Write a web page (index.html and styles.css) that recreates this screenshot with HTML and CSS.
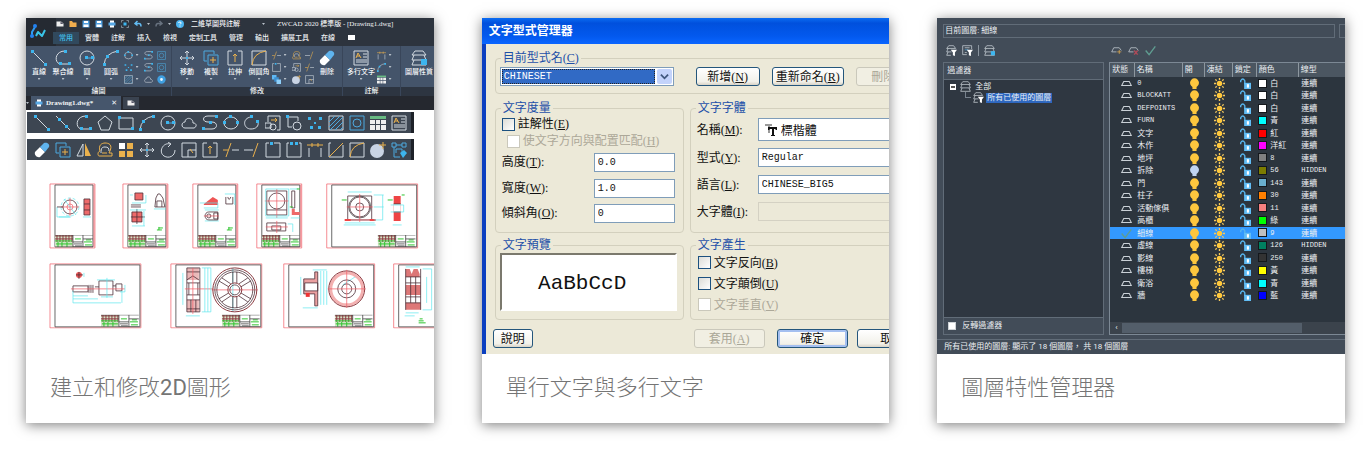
FILE: index.html
```html
<!DOCTYPE html>
<html lang="zh-Hant">
<head>
    <meta charset="UTF-8">
    <meta name="viewport" content="width=device-width, initial-scale=1.0">
    <title>ZWCAD 功能介紹</title>
    <link rel="stylesheet" href="styles.css">
</head>
<body>
    <!-- Icon set, 16x16 grid -->
    <svg class="defs" aria-hidden="true">
        <symbol id="line" viewBox="0 0 16 16"><path class="w" d="M1 1l14 14"/><path class="bf" d="M0 0h3v3H0zM13 13h3v3h-3z"/></symbol>
        <symbol id="xline" viewBox="0 0 16 16"><path class="w" d="M1 1l14 14"/><path class="bf" d="M3 3h3v3H3zM10 10h3v3h-3z"/></symbol>
        <symbol id="pline" viewBox="0 0 16 16"><path class="w" d="M10 1C-1 1-1 14 6 14h8"/><path class="bf" d="M9 0h3v3H9zM4 12h3v3H4zM13 12h3v3h-3z"/></symbol>
        <symbol id="polygon" viewBox="0 0 16 16"><path class="w" d="M8 1l7 6-3 8H4L1 7z"/></symbol>
        <symbol id="rect" viewBox="0 0 16 16"><path class="w" d="M1 3h14v11H1z"/><path class="bf" d="M0 1h3v3H0zM13 12h3v3h-3z"/></symbol>
        <symbol id="arc" viewBox="0 0 16 16"><path class="w" d="M1 15Q2 3 15 1"/><path class="bf" d="M0 13h3v3H0zM3 5h3v3H3zM13 0h3v3h-3z"/></symbol>
        <symbol id="circle" viewBox="0 0 16 16"><circle class="w" cx="8" cy="8" r="7"/><path class="b" d="M8 8h6"/><path class="bf" d="M6 6h3v3H6zM12 6h3v3h-3z"/></symbol>
        <symbol id="cloud" viewBox="0 0 16 16"><path class="w" d="M4 13h9c3-1 3-5-1-5 0-6-8-6-8-1-4 0-4 6 0 6z"/></symbol>
        <symbol id="spline" viewBox="0 0 16 16"><path class="w" d="M14 1H6C0 1 0 7 6 7h4c6 0 6 7 0 7H2"/><path class="bf" d="M13 0h3v3h-3zM7 6h3v3H7zM0 12h3v3H0z"/></symbol>
        <symbol id="ellipse" viewBox="0 0 16 16"><ellipse class="w" cx="8" cy="8" rx="7" ry="6"/><path class="bf" d="M6 0h3v3H6zM0 6h3v3H0zM13 6h3v3h-3z"/></symbol>
        <symbol id="earc" viewBox="0 0 16 16"><path class="w" d="M7 2C-2 3-1 14 7 14c5 0 8-3 7-7"/><path class="bf" d="M6 0h3v3H6zM12 5h3v3h-3z"/></symbol>
        <symbol id="insert" viewBox="0 0 16 16"><path class="w" d="M3 7V1h12v14h-3M0 8h6v5H0z"/><circle class="w" cx="8" cy="12" r="3"/><path class="y" d="M6 5h6M10 3l2 2-2 2"/></symbol>
        <symbol id="block" viewBox="0 0 16 16"><path class="w" d="M2 1v11h4M2 2h10v4"/><circle class="w" cx="11" cy="11" r="4"/><path class="bf" d="M0 0h3v3H0z"/></symbol>
        <symbol id="point" viewBox="0 0 16 16"><path class="bf" d="M1 2h3v3H1zM12 2h3v3h-3zM7 7h2v2H7zM3 11h3v3H3zM11 11h3v3h-3z"/></symbol>
        <symbol id="hatch" viewBox="0 0 16 16"><path class="w" d="M1 1h14v14H1z"/><path class="b" d="M1 7l6-6M1 12L12 1M2 15L15 2M7 15l8-8M12 15l3-3"/></symbol>
        <symbol id="region" viewBox="0 0 16 16"><path class="b" d="M1 1h14v14H1z"/><circle class="b" cx="8" cy="8" r="4"/></symbol>
        <symbol id="donut" viewBox="0 0 16 16"><circle cx="8" cy="8" r="5" fill="#eaf6ff" stroke="#3f9fe0" stroke-width="5"/></symbol>
        <symbol id="table" viewBox="0 0 16 16"><path fill="#68bb83" d="M0 1h16v3H0z"/><path fill="#eee" d="M0 5h5v4H0zM6 5h4v4H6zM11 5h5v4h-5zM0 10h5v5H0zM6 10h4v5H6zM11 10h5v5h-5z"/></symbol>
        <symbol id="mtext" viewBox="0 0 16 16"><path class="w" d="M1 1h14v14H1zM10 4h4M10 7h4M3 10h11M3 12h11"/><path class="y" d="M3 8l2-5 3 5M4 6h3"/></symbol>
        <symbol id="eraser" viewBox="0 0 16 16"><path fill="#fff" d="M1 10l5-5 5 5-5 5c-3 1-6-2-5-5z"/><path fill="#5fb4ee" d="M6 5l4-4c3-1 6 1 5 4l-4 5z"/></symbol>
        <symbol id="copy" viewBox="0 0 16 16"><path class="b" d="M4 11H1V1h10v3"/><path class="b" d="M5 5h10v10H5z"/><path class="y" d="M10 7v6M7 10h6"/></symbol>
        <symbol id="mirror" viewBox="0 0 16 16"><path class="w" d="M1 14L7 2v12z"/><path fill="#eab14d" d="M9 1l6 13H9z"/></symbol>
        <symbol id="offset" viewBox="0 0 16 16"><path class="w" d="M4 11C4 6 5 5 8 5s4 1 4 4"/><path class="y" d="M2 14h13v-3h-3C17 2 11 1 8 1S1 3 3 9c-3 1-2 5-1 5zM5 11h5"/></symbol>
        <symbol id="array" viewBox="0 0 16 16"><path fill="#fff" d="M1 1h6v6H1z"/><path fill="#eab14d" d="M9 1h6v6H9zM1 9h6v6H1zM9 9h6v6H9z"/></symbol>
        <symbol id="order" viewBox="0 0 16 16"><path fill="#5fb8f4" d="M0 0h8v8H0z"/><path fill="#3d8fd0" d="M4 4h8v8H4z"/><path fill="#8fd0fa" d="M8 8h8v8H8z"/></symbol>
        <symbol id="move" viewBox="0 0 16 16"><path class="w" d="M8 1v14M1 8h14M6 3l2-2 2 2M6 13l2 2 2-2M3 6L1 8l2 2M13 6l2 2-2 2"/><path class="bf" d="M7 7h2v2H7z"/></symbol>
        <symbol id="rotate" viewBox="0 0 16 16"><path class="w" d="M10 2C3 0-2 10 4 14c5 3 11 0 11-6M8 0l3 2-3 3"/></symbol>
        <symbol id="scale" viewBox="0 0 16 16"><path class="w" d="M1 1h14v14H1zM7 15V8h8"/><path class="y" d="M12 11L9 7"/></symbol>
        <symbol id="stretch" viewBox="0 0 16 16"><path class="w" d="M5 1H1v14h14V1h-4"/><path class="y" d="M8 12V4M6 6l2-2 2 2"/></symbol>
        <symbol id="trim" viewBox="0 0 16 16"><path class="y" d="M3 15L8 1M0 8h5"/><path class="w" d="M9 8h7"/></symbol>
        <symbol id="extend" viewBox="0 0 16 16"><path class="w" d="M0 8h9"/><path class="y" d="M9 15l5-14"/></symbol>
        <symbol id="break1" viewBox="0 0 16 16"><path class="w" d="M4 1H1v14h14V1H9"/><path class="bf" d="M5 0h3v3H5z"/></symbol>
        <symbol id="break2" viewBox="0 0 16 16"><path class="w" d="M3 1H1v14h14V1h-2"/><path class="bf" d="M4 0h3v3H4zM9 0h3v3H9z"/></symbol>
        <symbol id="join" viewBox="0 0 16 16"><path class="w" d="M2 15V6M14 15V6"/><path class="y" d="M0 3h16M5 1v4M11 1v4"/></symbol>
        <symbol id="chamfer" viewBox="0 0 16 16"><path class="w" d="M3 1H1v14h14V3"/><path class="y" d="M1 15L15 1"/></symbol>
        <symbol id="fillet" viewBox="0 0 16 16"><path class="w" d="M1 1h14v14H1z"/><path class="y" d="M1 15Q2 3 15 1"/></symbol>
        <symbol id="explode" viewBox="0 0 16 16"><circle cx="7" cy="9" r="7" fill="#c9d4e4"/><path class="y" d="M13 0v7M9 3h7"/></symbol>
        <symbol id="gear" viewBox="0 0 16 16"><path class="b" d="M1 1h4v4H1zM11 1h4v4h-4zM5 3h6M3 5v10h6M5 11V7h6v3"/><path class="bf" d="M9 11l4-3 3 3-4 5z"/></symbol>
        <symbol id="layers" viewBox="0 0 16 16"><path class="w" d="M4 1h8l3 4H1zM3 5L1 10h14l-2-5M3 10l-2 5h14l-2-5"/><path class="bf" d="M10 9h6v6h-6z"/></symbol>
        <symbol id="doc" viewBox="0 0 16 16"><path fill="#eee" d="M1 3h9l5 4v6H1z"/><path fill="#556" d="M9 3v5h6z"/></symbol>
        <symbol id="folder" viewBox="0 0 16 16"><path fill="#f2ae4e" d="M1 2h5l2 3h7v9H1z"/></symbol>
        <symbol id="save" viewBox="0 0 16 16"><path fill="#4c9ee0" d="M1 1h14v14H1z"/><path fill="#fff" d="M4 2h8v4H4zM3 9h10v5H3z"/></symbol>
        <symbol id="print" viewBox="0 0 16 16"><path fill="#fff" d="M4 1h8v14H4z"/><path fill="#58a9e6" d="M1 5h14v6H1z"/></symbol>
        <symbol id="preview" viewBox="0 0 16 16"><path class="w" d="M1 5V1h4M11 1h4v4M1 11v4h4M15 11v4h-4"/><path class="bf" d="M5 5h6v6H5z"/></symbol>
        <symbol id="undo" viewBox="0 0 16 16"><path fill="none" stroke="#63bcf3" stroke-width="3" d="M7 2L2 7l5 4M3 7h7q4 0 4 6"/></symbol>
        <symbol id="redo" viewBox="0 0 16 16"><path fill="none" stroke="#68727f" stroke-width="3" d="M9 2l5 5-5 4M13 7H6q-4 0-4 6"/></symbol>
        <symbol id="help" viewBox="0 0 16 16"><circle cx="8" cy="8" r="8" fill="#4cb4f0"/><path fill="none" stroke="#fff" stroke-width="2" d="M5 6q1-3 4-2 3 2-1 5M8 11v2"/></symbol>
        <symbol id="state" viewBox="0 0 16 16"><path fill="none" stroke="#c9d0d6" stroke-width="1.5" d="M4 5h8l3 6H1z"/></symbol>
        <symbol id="check" viewBox="0 0 16 16"><path fill="none" stroke="#5f9d91" stroke-width="2" d="M1 8l5 6L15 2"/></symbol>
        <symbol id="bulb" viewBox="0 0 16 16"><circle cx="8" cy="7" r="6.5" fill="currentColor"/><path fill="currentColor" d="M5 11h6v5H5z"/></symbol>
        <symbol id="sun" viewBox="0 0 16 16"><circle cx="8" cy="8" r="4" fill="#ffc83c"/><path fill="none" stroke="#f6c95c" stroke-width="2" d="M8 0v3M8 13v3M0 8h3M13 8h3M2 2l2 2M12 12l2 2M14 2l-2 2M4 12l-2 2"/></symbol>
        <symbol id="lock" viewBox="0 0 16 16"><path fill="none" stroke="#58b6ee" stroke-width="2" d="M1 6V4q3-5 6 0v5"/><path fill="#62bdf5" d="M6 7h10v9H6z"/><path fill="#fff" d="M10 9h3v5h-3z"/></symbol>
        <symbol id="filter" viewBox="0 0 16 16"><path class="w" d="M4 1h7l3 4H1zM3 5l-2 5h7M3 10l-2 5h6"/><path fill="#fff" d="M7 7h9l-3 4v5l-3-1v-4z"/></symbol>
        <symbol id="filter2" viewBox="0 0 16 16"><path class="w" d="M14 6V1H1v13h6M4 4h7M4 11h3"/><path class="b" d="M4 7h5"/><path fill="#fff" d="M7 7h9l-3 4v5l-3-1v-4z"/></symbol>
        <symbol id="stack" viewBox="0 0 16 16"><path class="w" d="M4 1h8l3 4H1zM3 5l-2 5h14l-2-5M3 10l-2 5h14l-2-5"/></symbol>
        <symbol id="newlayer" viewBox="0 0 16 16"><path class="w" d="M1 10l3-6h8l3 4M1 10h7"/><path class="y" d="M12 7v6M9 10h6"/></symbol>
        <symbol id="dellayer" viewBox="0 0 16 16"><path class="w" d="M1 10l3-6h8l3 4M1 10h7"/><path fill="none" stroke="#b04a58" stroke-width="2" d="M9 8l5 6M14 8l-5 6"/></symbol>
        <symbol id="portrait" viewBox="0 0 47 66">
            <path class="red" d="M1 1h45v64H1z"/><path class="blk" d="M6 2h38v62H6z"/><path class="red" d="M45 2v62"/>
            <use href="#titleblock" x="6" y="52" width="38" height="12"/>
        </symbol>
        <symbol id="landscape" viewBox="0 0 93 66">
            <path class="red" d="M1 1h91v64H1z"/><path class="blk" d="M6 2h85v62H6z"/>
            <use href="#titleblock" x="52" y="52" width="38" height="12"/>
        </symbol>
        <symbol id="titleblock" viewBox="0 0 38 12">
            <path fill="#d3e3c6" d="M0 0h18v12H0z"/>
            <path class="maroon" d="M0 1h18M0 4h18M2 0v7M5 0v7M8 0v7M11 0v7M14 0v7M17 0v7"/>
            <path class="grn" d="M0 6h17M1 9h16M3 7v5M7 7v5M12 7v5M20 4h6M29 7h8M31 5h5M30 10h7"/>
            <path class="blk" d="M0 0h38M18 0v12M28 0v12M18 7h10M28 4h10M0 12h38M19 9h8M20 11h7"/>
        </symbol>
    </svg>

    <main class="features">
        <article class="card">
            <div class="shot cad">
                <header class="cad-head">
                    <div class="logo">
                        <svg viewBox="0 0 30 28"><path fill="none" stroke="#2f9cf4" stroke-width="2" d="M9 9l-3 5v4"/><path fill="none" stroke="#39c4e8" stroke-width="2" stroke-linejoin="round" d="M10 18l2-4 4 4 3-6"/><circle cx="9" cy="8" r="2" fill="#2482f0"/><circle cx="6" cy="18" r="2" fill="#2482f0"/></svg>
                    </div>
                    <div class="cad-bars">
                        <div class="quick">
                            <button aria-label="新建"><svg><use href="#doc"/></svg></button>
                            <button aria-label="打開"><svg><use href="#folder"/></svg></button>
                            <button aria-label="儲存"><svg><use href="#save"/></svg></button>
                            <button aria-label="另存"><svg><use href="#save"/></svg></button>
                            <button aria-label="列印"><svg><use href="#print"/></svg></button>
                            <button aria-label="預覽"><svg><use href="#preview"/></svg></button>
                            <button aria-label="復原"><svg><use href="#undo"/></svg></button>
                            <i class="tri"></i>
                            <button aria-label="重做"><svg><use href="#redo"/></svg></button>
                            <i class="tri"></i>
                            <button aria-label="說明"><svg><use href="#help"/></svg></button>
                            <select class="workspace" aria-label="工作空間"><option>二維草圖與註解</option></select>
                            <i class="tri"></i>
                            <span class="app-title">ZWCAD 2020 標準版 - [Drawing1.dwg]</span>
                        </div>
                        <nav class="tabs">
                            <a href="#" class="active">常用</a><a href="#">實體</a><a href="#">註解</a><a href="#">插入</a><a href="#">檢視</a><a href="#">定制工具</a><a href="#">管理</a><a href="#">輸出</a><a href="#">擴展工具</a><a href="#">在線</a>
                            <button class="fold" aria-label="收合"></button>
                        </nav>
                    </div>
                </header>
                <div class="ribbon">
                    <section class="group g-draw">
                        <div class="tools">
                            <button class="big"><svg><use href="#line"/></svg>直線<i class="tri"></i></button>
                            <button class="big"><svg><use href="#pline"/></svg>聚合線<i class="tri"></i></button>
                            <button class="big"><svg><use href="#circle"/></svg>圓<i class="tri"></i></button>
                            <button class="big"><svg><use href="#arc"/></svg>圓弧<i class="tri"></i></button>
                            <div class="small">
                                <svg><use href="#ellipse"/></svg><i class="tri"></i><svg><use href="#spline"/></svg><svg><use href="#region"/></svg>
                                <svg><use href="#point"/></svg><i class="tri"></i><svg><use href="#spline"/></svg><svg><use href="#region"/></svg>
                                <svg><use href="#hatch"/></svg><i class="tri"></i><svg><use href="#cloud"/></svg><svg><use href="#donut"/></svg>
                            </div>
                        </div>
                        <div class="group-name">繪圖</div>
                    </section>
                    <section class="group g-modify">
                        <div class="tools">
                            <button class="big"><svg><use href="#move"/></svg>移動<i class="tri"></i></button>
                            <button class="big"><svg><use href="#copy"/></svg>複製<i class="tri"></i></button>
                            <button class="big"><svg><use href="#stretch"/></svg>拉伸<i class="tri"></i></button>
                            <button class="big"><svg><use href="#fillet"/></svg>倒圓角<i class="tri"></i></button>
                            <div class="small">
                                <svg><use href="#trim"/></svg><i class="tri"></i><svg><use href="#offset"/></svg><svg><use href="#extend"/></svg>
                                <svg><use href="#break1"/></svg><i class="tri"></i><svg><use href="#insert"/></svg><svg><use href="#trim"/></svg>
                                <svg><use href="#order"/></svg><i class="tri"></i><svg><use href="#explode"/></svg><svg><use href="#scale"/></svg>
                            </div>
                            <button class="big"><svg><use href="#eraser"/></svg>刪除</button>
                        </div>
                        <div class="group-name">修改</div>
                    </section>
                    <section class="group g-note">
                        <div class="tools">
                            <button class="big wide"><svg><use href="#mtext"/></svg>多行文字<i class="tri"></i></button>
                            <div class="small pair">
                                <svg><use href="#join"/></svg><i class="tri"></i>
                                <svg><use href="#arc"/></svg><i class="tri"></i>
                                <svg><use href="#table"/></svg><i class="tri"></i>
                            </div>
                        </div>
                        <div class="group-name">註解</div>
                    </section>
                    <section class="group g-layer">
                        <div class="tools">
                            <button class="big wide"><svg><use href="#layers"/></svg>圖層性質</button>
                        </div>
                        <div class="group-name"></div>
                    </section>
                </div>
                <div class="files">
                    <i class="tri"></i>
                    <div class="file"><svg><use href="#print"/></svg><span>Drawing1.dwg*</span><button aria-label="關閉">✕</button></div>
                    <button class="new-file" aria-label="新圖"><svg><use href="#doc"/></svg></button>
                </div>
                <div class="toolbar">
                    <svg><use href="#line"/></svg><svg><use href="#xline"/></svg><svg><use href="#pline"/></svg><svg><use href="#polygon"/></svg><svg><use href="#rect"/></svg><svg><use href="#arc"/></svg><svg><use href="#circle"/></svg><svg><use href="#cloud"/></svg><svg><use href="#spline"/></svg><svg><use href="#ellipse"/></svg><svg><use href="#earc"/></svg><svg><use href="#insert"/></svg><svg><use href="#block"/></svg><svg><use href="#point"/></svg><svg><use href="#hatch"/></svg><svg><use href="#region"/></svg><svg><use href="#table"/></svg><svg><use href="#mtext"/></svg>
                </div>
                <div class="toolbar">
                    <svg><use href="#eraser"/></svg><svg><use href="#copy"/></svg><svg><use href="#mirror"/></svg><svg><use href="#offset"/></svg><svg><use href="#array"/></svg><svg><use href="#move"/></svg><svg><use href="#rotate"/></svg><svg><use href="#scale"/></svg><svg><use href="#stretch"/></svg><svg><use href="#trim"/></svg><svg><use href="#extend"/></svg><svg><use href="#break1"/></svg><svg><use href="#break2"/></svg><svg><use href="#join"/></svg><svg><use href="#chamfer"/></svg><svg><use href="#fillet"/></svg><svg><use href="#explode"/></svg><svg><use href="#gear"/></svg>
                </div>
                <!-- Drawing sheets -->
                <svg class="drawing" viewBox="0 0 408 188">
                    <g transform="translate(23 17)">
                        <use href="#portrait" width="47" height="66"/>
                        <circle class="cyn" cx="21" cy="24" r="9" stroke-dasharray="3 2"/><circle class="dark" cx="21" cy="24" r="7"/><circle class="red" cx="21" cy="24" r="3"/><path class="red" d="M12 24h18M21 15v18"/>
                        <path class="cyn" d="M8 24v10h13M10 34h12M15 16l12 16"/><path class="dark" d="M8 24h6"/>
                        <path fill="#ee6a6a" d="M35 16h6v16h-6z"/><path class="dark" d="M35 16h6v16h-6zM35 21h6M35 27h6"/><path class="cyn" d="M34 34h8"/>
                    </g>
                    <g transform="translate(96 17)">
                        <use href="#portrait" width="47" height="66"/>
                        <path fill="#ee6a6a" d="M13 10h8v7h-8zM10 29h10v10H10z"/><path class="dark" d="M13 10h8v7h-8zM9 22h10M9 24h10M10 29h10v10H10zM15 26v15M9 34h14M33 24h10l-2-9-3-4h-2l-2 4zM35 24v-6h5v6"/>
                        <path class="cyn" d="M8 12h3M10 20h14v-8M10 43h13M22 28v15M8 27h16M32 26h12"/>
                        <path class="grn" d="M35 47h5M37 45h4M37 44v3"/>
                    </g>
                    <g transform="translate(166 17)">
                        <use href="#portrait" width="47" height="66"/>
                        <path fill="#ee5555" d="M12 21l9-7 5 3v5H12z"/><path class="cyn" d="M8 20h18v5H12M33 11h10v11M13 27h14M13 38h14"/>
                        <path class="dark" d="M34 14v7h7v-7M36 14q1 5 3 0M17 29h9v8h-9c-5 0-5-8 0-8zM22 30h4v6h-4z"/><circle class="dark" cx="17" cy="33" r="2"/><path class="red" d="M12 33h15"/>
                        <path class="grn" d="M35 47h5M37 45h4M37 44v3"/>
                    </g>
                    <g transform="translate(230 17)">
                        <use href="#portrait" width="47" height="66"/>
                        <path class="dark" d="M11 8h20v24H11zM11 27h20M36 8h3v17h-3zM11 40h19v8H11zM16 43h9v4h-9z"/><circle class="dark" cx="21" cy="18" r="8"/>
                        <path class="red" d="M9 18h24M21 6v29M21 38v12M10 44h22"/><path fill="#ee6a6a" d="M36 26h3v3h5v3h-8z"/>
                        <path class="cyn" d="M10 6h23v27H10zM10 35h22M34 6h8M35 35h9M32 41h5v8"/><path class="grn" d="M41 6h3M34 24h3"/>
                    </g>
                    <g transform="translate(300 17)">
                        <use href="#landscape" width="93" height="66"/>
                        <path class="dark" d="M22 13h24v24H22z"/><circle class="blk" cx="34" cy="24" r="11"/><circle class="dark" cx="34" cy="24" r="10"/><circle class="dark" cx="34" cy="24" r="4"/>
                        <path class="red" d="M19 37h30M34 11v28M21 24h26"/><path fill="#e44" d="M19 36h6v2h-6zM44 36h6v2h-6zM68 13h7v25h-7z"/><path fill="#fff" d="M68 21h7v8h-7z"/><path class="dark" d="M68 21h7M68 29h7"/>
                        <path class="cyn" d="M18 42h32M19 40h30M48 12h10M48 24h10M57 12v25h-9M22 9h24M65 22h13v7H65M67 42h9"/><path class="grn" d="M16 17h5M62 17h5M76 12h3"/>
                    </g>
                    <g transform="translate(23 97)">
                        <use href="#landscape" width="93" height="66"/>
                        <circle cx="30" cy="12" r="3" fill="#e55"/><path class="dark" d="M27 12h7M30 9v7M24 23h15v6H24zM40 22v8M42 22v8M44 22v8M46 24h4M50 18h14v14H50zM67 21h6v7h-6zM64 23h3"/>
                        <path class="red" d="M22 26h54"/><path class="cyn" d="M24 33h15M24 36h25M24 40h48M24 28v12M73 28v12M48 17h18M52 34h12M58 15v20M76 22v7h-5M35 10v4"/>
                    </g>
                    <g transform="translate(144 97)">
                        <use href="#landscape" width="93" height="66"/>
                        <path fill="#e9b9b9" d="M17 5h12v12H17zM17 37h12v12H17z"/><path class="dark" d="M17 5h13v44H17zM17 9h13M17 17l6-4 6 4M17 20h13M17 32h13M17 37h13M19 20v12M28 20v12M21 37v12M26 37v12M17 46h13"/>
                        <path class="red" d="M15 26h28M23 5v46M42 27h46"/><path class="cyn" d="M13 10v32M32 5h9M32 49h9M35 5v44M38 5v44M41 5v44M16 53h14M63 5v44"/>
                        <circle class="maroon" cx="65" cy="27" r="22"/><circle class="dark" cx="65" cy="27" r="20"/><circle class="dark" cx="65" cy="27" r="18"/><circle class="maroon" cx="65" cy="27" r="7"/><circle class="dark" cx="65" cy="27" r="5"/>
                        <path class="dark" d="M63 20V9M67 20V9M63 34v11M67 34v11M59 24l-10-6M61 21l-9-6M71 24l10-6M69 21l9-6M59 30l-10 6M61 33l-9 6M71 30l10 6M69 33l9 6"/>
                    </g>
                    <g transform="translate(257 97)">
                        <use href="#landscape" width="93" height="66"/>
                        <path fill="#eba0a0" d="M21 16h11v-7h3v34h-3V31H21z"/><path fill="#fff" d="M22 20h13v8H22z"/><path class="dark" d="M21 16h11V9h3v34h-3V31H21zM22 20h13v8H22z"/><path fill="#e33" d="M23 30h4v4h-4z"/>
                        <path class="cyn" d="M18 14v18M38 8v34M41 8v34M44 8v34M30 7h14M20 45h15M60 22l14-9"/>
                        <circle cx="64" cy="26" r="16" fill="none" stroke="#f3b0b0" stroke-width="3"/><circle class="maroon" cx="64" cy="26" r="18"/><circle class="dark" cx="64" cy="26" r="9"/><circle class="dark" cx="64" cy="26" r="5"/><path class="red" d="M45 26h38M64 7v38"/>
                    </g>
                    <g transform="translate(367 97)">
                        <use href="#landscape" width="93" height="66"/>
                        <path fill="#d77" d="M13 6h4l2 5 2-5h4l2 5v3H13zM13 22h15v10H13zM13 40h15v7H13z"/><path class="dark" d="M13 6v41M28 6v41M13 14h15M13 20h15M13 34h15M13 40h15M18 14v26M23 14v26"/>
                        <path class="cyn" d="M30 6h9v41h-9M34 14v26M13 50h13M12 53h10M13 4h14"/><path class="grn" d="M26 58h5M27 56h3M26 60h7"/>
                    </g>
                </svg>
            </div>
            <h3 class="caption">建立和修改<span>2D</span>圖形</h3>
        </article>

        <article class="card">
            <div class="shot dialog">
                <div class="dialog-title">文字型式管理器</div>
                <div class="dialog-body">
                    <fieldset class="style-name">
                        <legend>目前型式名(<u>C</u>)</legend>
                        <div class="combo">
                            <select aria-label="目前型式名"><option>CHINESET</option></select>
                            <span class="combo-arrow"><svg viewBox="0 0 10 10"><path d="M1 3l4 4 4-4"/></svg></span>
                        </div>
                        <button class="xp w64">新增(<u>N</u>)</button>
                        <button class="xp w72">重新命名(<u>R</u>)</button>
                        <button class="xp w72" disabled>刪除(<u>D</u>)</button>
                    </fieldset>
                    <div class="columns">
                        <fieldset class="metrics">
                            <legend>文字度量</legend>
                            <label><input type="checkbox">註解性(<u>E</u>)</label>
                            <label class="sub off"><input type="checkbox" disabled>使文字方向與配置匹配(<u>H</u>)</label>
                            <div class="field"><label for="height">高度(<u>T</u>):</label><input id="height" type="text" value="0.0"></div>
                            <div class="field"><label for="width">寬度(<u>W</u>):</label><input id="width" type="text" value="1.0"></div>
                            <div class="field"><label for="angle">傾斜角(<u>O</u>):</label><input id="angle" type="text" value="0"></div>
                        </fieldset>
                        <fieldset class="font">
                            <legend>文字字體</legend>
                            <div class="field"><label for="fname">名稱(<u>M</u>):</label>
                                <div class="font-box">
                                    <svg viewBox="0 0 12 12"><path fill="#999" d="M0 0h7v2H5v7H3V2H0z"/><path fill="#111" d="M3 3h9v3h-1l-1-1H9v6h1v1H6v-1h1V5H5L4 6H3z"/></svg>
                                    <select id="fname"><option>標楷體</option></select>
                                </div>
                            </div>
                            <div class="field"><label for="fstyle">型式(<u>Y</u>):</label><select id="fstyle"><option>Regular</option></select></div>
                            <div class="field"><label for="flang">語言(<u>L</u>):</label><select id="flang"><option>CHINESE_BIG5</option></select></div>
                            <div class="field"><label for="fbig">大字體(<u>I</u>):</label><select id="fbig" disabled><option></option></select></div>
                        </fieldset>
                        <fieldset>
                            <legend>文字預覽</legend>
                            <div class="sample">AaBbCcD</div>
                        </fieldset>
                        <fieldset class="effects">
                            <legend>文字產生</legend>
                            <label><input type="checkbox">文字反向(<u>B</u>)</label>
                            <label><input type="checkbox">文字顛倒(<u>U</u>)</label>
                            <label class="off"><input type="checkbox" disabled>文字垂直(<u>V</u>)</label>
                        </fieldset>
                    </div>
                    <div class="actions">
                        <button class="xp help">說明</button>
                        <button class="xp w72" disabled>套用(<u>A</u>)</button>
                        <button class="xp w72 default">確定</button>
                        <button class="xp w72">取消</button>
                    </div>
                </div>
            </div>
            <h3 class="caption">單行文字與多行文字</h3>
        </article>

        <article class="card">
            <div class="shot layers">
                <div class="current"><span>目前圖層: 細線</span><span class="search"></span></div>
                <div class="layer-tools">
                    <div class="left">
                        <button aria-label="新特性過濾器"><svg><use href="#filter"/></svg></button>
                        <button aria-label="新組過濾器"><svg><use href="#filter2"/></svg></button>
                        <i class="bar"></i>
                        <button aria-label="圖層狀態"><svg><use href="#layers"/></svg></button>
                    </div>
                    <button aria-label="新建圖層"><svg><use href="#newlayer"/></svg></button>
                    <button aria-label="刪除圖層"><svg><use href="#dellayer"/></svg></button>
                    <button aria-label="置為目前"><svg><use href="#check"/></svg></button>
                </div>
                <div class="panes">
                    <div class="filters">
                        <div class="pane-head">過濾器</div>
                        <ul class="tree">
                            <li><i class="node"></i><svg><use href="#stack"/></svg>全部</li>
                            <li class="child"><i class="branch"></i><svg><use href="#filter"/></svg><span>所有已使用的圖層</span></li>
                        </ul>
                        <label class="invert"><input type="checkbox">反轉過濾器</label>
                    </div>
                    <div class="list">
                        <table>
                            <thead>
                                <tr><th class="c-state">狀態</th><th class="c-name">名稱</th><th class="c-on">開</th><th class="c-freeze">凍結</th><th class="c-lock">鎖定</th><th class="c-color">顏色</th><th>線型</th></tr>
                            </thead>
                            <tbody>
                                <tr><td><svg><use href="#state"/></svg></td><td class="en">0</td><td><svg class="on"><use href="#bulb"/></svg></td><td><svg><use href="#sun"/></svg></td><td><svg><use href="#lock"/></svg></td><td><i class="sw white"></i>白</td><td>連續</td></tr>
                                <tr><td><svg><use href="#state"/></svg></td><td class="en">BLOCKATT</td><td><svg class="on"><use href="#bulb"/></svg></td><td><svg><use href="#sun"/></svg></td><td><svg><use href="#lock"/></svg></td><td><i class="sw white"></i>白</td><td>連續</td></tr>
                                <tr><td><svg><use href="#state"/></svg></td><td class="en">DEFPOINTS</td><td><svg class="on"><use href="#bulb"/></svg></td><td><svg><use href="#sun"/></svg></td><td><svg><use href="#lock"/></svg></td><td><i class="sw white"></i>白</td><td>連續</td></tr>
                                <tr><td><svg><use href="#state"/></svg></td><td class="en">FURN</td><td><svg class="on"><use href="#bulb"/></svg></td><td><svg><use href="#sun"/></svg></td><td><svg><use href="#lock"/></svg></td><td><i class="sw cyan"></i>青</td><td>連續</td></tr>
                                <tr><td><svg><use href="#state"/></svg></td><td>文字</td><td><svg class="on"><use href="#bulb"/></svg></td><td><svg><use href="#sun"/></svg></td><td><svg><use href="#lock"/></svg></td><td><i class="sw red-sw"></i>紅</td><td>連續</td></tr>
                                <tr><td><svg><use href="#state"/></svg></td><td>木作</td><td><svg class="on"><use href="#bulb"/></svg></td><td><svg><use href="#sun"/></svg></td><td><svg><use href="#lock"/></svg></td><td><i class="sw magenta"></i>洋紅</td><td>連續</td></tr>
                                <tr><td><svg><use href="#state"/></svg></td><td>地坪</td><td><svg class="on"><use href="#bulb"/></svg></td><td><svg><use href="#sun"/></svg></td><td><svg><use href="#lock"/></svg></td><td class="en"><i class="sw c8"></i>8</td><td>連續</td></tr>
                                <tr><td><svg><use href="#state"/></svg></td><td>拆除</td><td><svg class="dim"><use href="#bulb"/></svg></td><td><svg><use href="#sun"/></svg></td><td><svg><use href="#lock"/></svg></td><td class="en"><i class="sw c56"></i>56</td><td class="en">HIDDEN</td></tr>
                                <tr><td><svg><use href="#state"/></svg></td><td>門</td><td><svg class="on"><use href="#bulb"/></svg></td><td><svg><use href="#sun"/></svg></td><td><svg><use href="#lock"/></svg></td><td class="en"><i class="sw c143"></i>143</td><td>連續</td></tr>
                                <tr><td><svg><use href="#state"/></svg></td><td>柱子</td><td><svg class="on"><use href="#bulb"/></svg></td><td><svg><use href="#sun"/></svg></td><td><svg><use href="#lock"/></svg></td><td class="en"><i class="sw c30"></i>30</td><td>連續</td></tr>
                                <tr><td><svg><use href="#state"/></svg></td><td>活動傢俱</td><td><svg class="on"><use href="#bulb"/></svg></td><td><svg><use href="#sun"/></svg></td><td><svg><use href="#lock"/></svg></td><td class="en"><i class="sw c11"></i>11</td><td>連續</td></tr>
                                <tr><td><svg><use href="#state"/></svg></td><td>高櫃</td><td><svg class="on"><use href="#bulb"/></svg></td><td><svg><use href="#sun"/></svg></td><td><svg><use href="#lock"/></svg></td><td><i class="sw green"></i>綠</td><td>連續</td></tr>
                                <tr class="selected"><td><svg><use href="#check"/></svg></td><td>細線</td><td><svg class="on"><use href="#bulb"/></svg></td><td><svg><use href="#sun"/></svg></td><td><svg><use href="#lock"/></svg></td><td class="en"><i class="sw c9"></i>9</td><td>連續</td></tr>
                                <tr><td><svg><use href="#state"/></svg></td><td>虛線</td><td><svg class="on"><use href="#bulb"/></svg></td><td><svg><use href="#sun"/></svg></td><td><svg><use href="#lock"/></svg></td><td class="en"><i class="sw c126"></i>126</td><td class="en">HIDDEN</td></tr>
                                <tr><td><svg><use href="#state"/></svg></td><td>影線</td><td><svg class="on"><use href="#bulb"/></svg></td><td><svg><use href="#sun"/></svg></td><td><svg><use href="#lock"/></svg></td><td class="en"><i class="sw c250"></i>250</td><td>連續</td></tr>
                                <tr><td><svg><use href="#state"/></svg></td><td>樓梯</td><td><svg class="on"><use href="#bulb"/></svg></td><td><svg><use href="#sun"/></svg></td><td><svg><use href="#lock"/></svg></td><td><i class="sw yellow"></i>黃</td><td>連續</td></tr>
                                <tr><td><svg><use href="#state"/></svg></td><td>衛浴</td><td><svg class="on"><use href="#bulb"/></svg></td><td><svg><use href="#sun"/></svg></td><td><svg><use href="#lock"/></svg></td><td><i class="sw cyan"></i>青</td><td>連續</td></tr>
                                <tr><td><svg><use href="#state"/></svg></td><td>牆</td><td><svg class="on"><use href="#bulb"/></svg></td><td><svg><use href="#sun"/></svg></td><td><svg><use href="#lock"/></svg></td><td><i class="sw blue"></i>藍</td><td>連續</td></tr>
                            </tbody>
                        </table>
                        <div class="scroll"><span>‹</span><i></i></div>
                    </div>
                </div>
                <div class="status">所有已使用的圖層: 顯示了 18 個圖層， 共 18 個圖層</div>
            </div>
            <h3 class="caption">圖層特性管理器</h3>
        </article>
    </main>
</body>
</html>
```
FILE: styles.css
```css
* {
    box-sizing: border-box;
}
body {
    margin: 0;
    background-color: #fff;
    font-family: Roboto, "Noto Sans CJK TC", sans-serif;
}
button {
    margin: 0;
    padding: 0;
    border: none;
    background: none;
    color: inherit;
    font: inherit;
}
select, input {
    margin: 0;
    font: inherit;
    color: inherit;
}
select {
    appearance: none;
}
svg {
    display: block;
    flex-shrink: 0;
}
.defs {
    position: absolute;
    width: 0;
    height: 0;
}

/* icon strokes */
.w { fill: none; stroke: #d3dae1; }
.b { fill: none; stroke: #4da9df; }
.y { fill: none; stroke: #eab14d; }
.bf { fill: #3db5ee; }

/* drawing strokes */
.red { fill: none; stroke: #f05a64; stroke-width: .7; }
.maroon { fill: none; stroke: #8c3a40; }
.blk { fill: none; stroke: #444; stroke-width: .8; }
.dark { fill: none; stroke: #4d3038; stroke-width: .8; }
.cyn { fill: none; stroke: #5fe6ee; stroke-width: .7; }
.grn { fill: none; stroke: #2fc52f; }

/* cards */
.features {
    display: grid;
    grid-template-columns: repeat(3, 1fr);
    gap: 48px;
    padding: 18px 26px;
}
.card {
    min-width: 0;
    background-color: #fff;
    box-shadow: 0 2px 12px rgba(0, 0, 0, 0.5);
}
.shot {
    aspect-ratio: 17 / 14;
    overflow: hidden;
}
.caption {
    margin: 0;
    padding: 18px 24px 19px;
    color: #757575;
    font-size: 22px;
    font-weight: 300;
    line-height: 32px;
}
.caption span {
    font-weight: 400;
}

/* CAD window */
.cad {
    color: #f4f6f8;
    font-size: 7px;
    font-weight: 500;
    line-height: 10px;
}
.tri {
    width: 3px;
    height: 2px;
    background-color: #b9c1ca;
    clip-path: polygon(0 0, 100% 0, 50% 100%);
}
.cad-head {
    display: flex;
    background-color: #2d343e;
}
.logo {
    width: 30px;
    background-color: #252a32;
}
.cad-bars {
    flex: 1;
    min-width: 0;
}
.quick {
    display: flex;
    align-items: center;
    gap: 5px;
    height: 12px;
    white-space: nowrap;
}
.quick svg {
    width: 8px;
    height: 8px;
}
.workspace {
    width: 68px;
    padding: 0 0 0 2px;
    border: none;
    background: none;
}
.app-title {
    margin-left: 7px;
    font-family: "Liberation Serif", "Noto Sans CJK TC", serif;
}
.tabs {
    display: flex;
    align-items: center;
    height: 16px;
    padding-bottom: 1px;
    margin-left: -3px;
}
.tabs a {
    padding: 0 6px;
    color: #eef1f4;
    line-height: 12px;
    text-decoration: none;
    white-space: nowrap;
}
.tabs .active {
    background-color: #31495d;
    color: #40c0ee;
}
.fold {
    width: 7px;
    height: 5px;
    margin-left: 7px;
    background-color: #fff;
}
.ribbon {
    display: flex;
    background-color: #44546a;
    overflow: hidden;
}
.group {
    flex-shrink: 0;
    border-right: 1px solid #39465a;
}
.g-draw { width: 146px; }
.g-modify { width: 171px; }
.g-note { width: 58px; }
.g-layer { width: 60px; }
.tools {
    display: flex;
    height: 41px;
    padding: 3px 0 0 1px;
}
.g-modify .tools,
.g-note .tools,
.g-layer .tools {
    padding-left: 3px;
}
.group-name {
    height: 9px;
    background-color: #2d3541;
    line-height: 9px;
    text-align: center;
}
.big {
    display: flex;
    flex-direction: column;
    align-items: center;
    width: 24px;
    line-height: 12px;
    white-space: nowrap;
}
.big.wide {
    width: 30px;
}
.big svg {
    width: 16px;
    height: 16px;
    margin-top: 1px;
}
.small {
    display: grid;
    grid-template-columns: 10px 8px 14px 12px;
    grid-auto-rows: 12px;
    place-items: center;
}
.small.pair {
    grid-template-columns: 10px 8px;
}
.small svg {
    width: 9px;
    height: 9px;
}
.files {
    display: flex;
    align-items: center;
    height: 14px;
    margin-bottom: 2px;
    background-color: #25282f;
}
.file {
    display: flex;
    align-items: center;
    gap: 3px;
    width: 90px;
    height: 14px;
    margin-left: 2px;
    padding: 0 4px;
    background-color: #46566c;
    font-family: "Liberation Serif", serif;
    font-size: 7px;
    font-weight: bold;
}
.file span {
    flex: 1;
}
.file button {
    font-family: "DejaVu Sans", sans-serif;
    font-size: 7px;
}
.files svg {
    width: 8px;
    height: 8px;
}
.new-file {
    height: 12px;
    margin-left: 2px;
    padding: 2px 4px;
    background-color: #3a4350;
}
.toolbar {
    display: flex;
    align-items: center;
    gap: 5px;
    width: 387px;
    height: 21px;
    margin: 0 0 6px 1px;
    padding-left: 7px;
    border-right: 3px solid #1d2128;
    background-color: #3d4652;
}
.toolbar svg {
    width: 16px;
    height: 16px;
}
.drawing {
    width: 100%;
}

/* text style dialog */
.dialog {
    display: flex;
    flex-direction: column;
    background-color: #ece9d8;
    color: #111;
    font-family: "Liberation Serif", "Noto Sans CJK TC", serif;
    font-size: 12px;
    line-height: 14px;
    white-space: nowrap;
}
.dialog-title {
    padding: 4px 7px;
    background: linear-gradient(#0b6cf2, #0050dd 20%, #0359ee 70%, #0a66ff);
    color: #fff;
    font-size: 12px;
    font-weight: bold;
    line-height: 18px;
}
.dialog-body {
    flex: 1;
    width: 500px;
    padding: 7px 0 0 9px;
    border-left: 4px solid #0b3fc0;
}
fieldset {
    min-width: 0;
    margin: 0;
    padding: 0 4px;
    border: 1px solid #d3d0be;
    border-radius: 4px;
}
legend {
    margin-left: 1px;
    padding: 0 2px;
    color: #1e50a8;
}
.style-name {
    display: flex;
    margin-bottom: 7px;
    padding-top: 2px;
    padding-bottom: 7px;
}
.combo {
    display: flex;
    width: 174px;
    height: 19px;
    margin-right: 22px;
    padding: 1px;
    border: 1px solid #7f9db9;
    background-color: #fff;
}
.combo select {
    flex: 1;
    padding: 0 1px;
    border: 1px dotted #222;
    background-color: #316ac5;
    color: #fff;
    font-family: "Liberation Mono", monospace;
    font-size: 10px;
}
.combo-arrow {
    display: flex;
    align-items: center;
    width: 15px;
    margin-left: 2px;
    padding-left: 3px;
    border-radius: 2px;
    background-color: #c3d3fb;
}
.combo-arrow svg {
    width: 9px;
    height: 9px;
    fill: none;
    stroke: #3f577d;
    stroke-width: 2;
}
.xp {
    height: 19px;
    margin-right: 12px;
    border: 1px solid #24567c;
    border-radius: 3px;
    background: linear-gradient(#fff, #f2f1ea 80%, #d8d3c6);
    line-height: 16px;
}
.xp:disabled {
    border-color: #cac8bb;
    background: #f1efe3;
    color: #aaa797;
}
.w64 { width: 64px; }
.w72 { width: 72px; }
.xp.default {
    box-shadow: inset 0 0 0 2px #a4bff0;
}
.columns {
    display: grid;
    grid-template-columns: 189px 1fr;
    column-gap: 6px;
    row-gap: 5px;
}
.metrics {
    display: grid;
    grid-template-rows: 18px 16px 26px 26px 24px;
    padding-right: 8px;
    padding-bottom: 7px;
}
.metrics label,
.effects label {
    display: flex;
    align-items: center;
    padding-left: 2px;
}
.metrics .sub {
    padding-left: 7px;
}
.off {
    color: #aca899;
}
input[type="checkbox"] {
    appearance: none;
    width: 13px;
    height: 13px;
    margin-right: 3px;
    border: 1px solid #1c5180;
    background: linear-gradient(135deg, #dcdcd7, #fff);
}
input[type="checkbox"]:disabled {
    border-color: #cac8bb;
    background: #fff;
}
.field {
    display: flex;
    align-items: center;
}
.metrics .field label {
    flex: 1;
}
.metrics .field input {
    width: 81px;
    height: 19px;
    padding: 0 3px;
    border: 1px solid #7f9db9;
    background-color: #fff;
    font-family: "Liberation Mono", monospace;
    font-size: 10px;
}
.font {
    display: grid;
    grid-template-rows: 29px 27px 27px 27px;
}
.font .field label {
    width: 63px;
    padding-left: 2px;
}
.font .field > select,
.font-box {
    flex: 1;
    height: 19px;
    padding: 0 3px;
    border: 1px solid #7f9db9;
    background-color: #fff;
    font-family: "Liberation Mono", monospace;
    font-size: 10px;
}
.font .field > select:disabled {
    border-color: #cac8bb;
    background-color: #ece9d8;
}
.font .font-box {
    display: flex;
    align-items: center;
    gap: 4px;
    height: 23px;
    padding: 0 6px;
}
.font-box svg {
    width: 12px;
    height: 12px;
}
.font-box select {
    padding: 0;
    border: none;
    background: none;
    font-family: "Noto Sans CJK TC", sans-serif;
    font-size: 12px;
}
.sample {
    height: 58px;
    margin: 1px 2px 8px 0;
    padding-right: 12px;
    border: 2px solid #fff;
    border-top-color: #7b796d;
    border-left-color: #7b796d;
    background-color: #fff;
    font-family: "Liberation Mono", monospace;
    font-size: 21px;
    line-height: 58px;
    text-align: center;
}
.effects label {
    height: 21px;
    padding-left: 3px;
}
.actions {
    display: flex;
    margin: 9px 0 0 -2px;
}
.actions .xp {
    width: 71px;
}
.actions .help {
    width: 40px;
    margin-right: 161px;
}
.actions .default {
    margin-right: 9px;
}

/* layer manager */
.layers {
    display: flex;
    flex-direction: column;
    padding: 6px 0 0 6px;
    background-color: #424c58;
    color: #eceff2;
    font-size: 8px;
    line-height: 12px;
    white-space: nowrap;
}
.current {
    display: flex;
    gap: 4px;
}
.current span {
    flex: 1;
    height: 14px;
    padding-left: 1px;
    border: 1px solid #616c78;
}
.current .search {
    flex: none;
    width: 6px;
    border-right: none;
}
.layer-tools {
    display: flex;
    align-items: center;
    gap: 6px;
    height: 24px;
}
.layer-tools .left {
    display: flex;
    gap: 5px;
    width: 162px;
    padding-left: 3px;
}
.layer-tools svg {
    width: 11px;
    height: 11px;
}
.layer-tools .bar {
    width: 1px;
    background-color: #8a949e;
}
.panes {
    display: flex;
    flex: 1;
    gap: 5px;
}
.filters {
    display: flex;
    flex-direction: column;
    width: 161px;
    border: 1px solid #616c78;
}
.pane-head {
    padding: 2px 3px;
    border-bottom: 1px solid #616c78;
}
.tree {
    flex: 1;
    margin: 0;
    padding: 1px 0 0 6px;
    background-color: #2f3741;
    list-style: none;
}
.tree li {
    display: flex;
    align-items: center;
    gap: 4px;
    height: 11px;
}
.tree svg {
    width: 11px;
    height: 11px;
}
.tree .child {
    gap: 2px;
    padding-left: 15px;
}
.tree span {
    padding: 0 1px;
    background-color: #2e67bf;
    line-height: 10px;
}
.node {
    width: 6px;
    height: 6px;
    border: 1px solid #fff;
    border-width: 2px 1px;
    background-color: #555;
}
.branch {
    width: 6px;
    height: 6px;
    margin-bottom: 5px;
    border: 1px solid #77818c;
    border-width: 0 0 1px 1px;
}
.invert {
    display: flex;
    align-items: center;
    height: 17px;
    padding-left: 4px;
    border-top: 1px solid #616c78;
}
.invert input[type="checkbox"] {
    width: 8px;
    height: 8px;
    margin-right: 6px;
    border: 1px solid #cdd2d6;
    background: #fff;
}
.list {
    display: flex;
    flex: 1;
    flex-direction: column;
    justify-content: space-between;
    min-width: 0;
    border: 1px solid #7c8894;
    border-right: none;
    background-color: #2c353e;
}
.list table {
    width: 100%;
    border-collapse: collapse;
    table-layout: fixed;
}
.list th {
    height: 14px;
    padding: 0 0 0 2px;
    border-right: 1px solid #8d979f;
    background-color: #4b5661;
    font-weight: normal;
    line-height: 12px;
    text-align: left;
}
.list th:last-child {
    border-right: none;
}
.c-state { width: 24px; }
.c-name { width: 48px; }
.c-on { width: 22px; }
.c-freeze { width: 28px; }
.c-lock { width: 24px; }
.c-color { width: 42px; }
.list td {
    height: 12px;
    padding: 0 0 0 3px;
    line-height: 11px;
}
.list tbody tr:nth-child(even) td {
    height: 13px;
}
.list .en {
    font-family: "Liberation Mono", monospace;
    font-size: 7px;
}
.list td svg {
    width: 11px;
    height: 11px;
    margin: 0 auto;
}
.list td:first-child svg {
    margin-left: 8px;
}
.list .on { color: #fdc63e; }
.list .dim { color: #c0d4f2; }
.selected td {
    background-color: #3399ff;
}
.sw {
    display: inline-block;
    width: 9px;
    height: 9px;
    margin: 0 3px 0 -1px;
    border: 1px solid #14181c;
    vertical-align: middle;
}
.white { background-color: #fff; }
.cyan { background-color: #00ffff; }
.red-sw { background-color: #f00; }
.magenta { background-color: #f0f; }
.green { background-color: #0f0; }
.yellow { background-color: #ff0; }
.blue { background-color: #00f; }
.c8 { background-color: #808080; }
.c9 { background-color: #c0c0c0; }
.c11 { background-color: #f47f7f; }
.c30 { background-color: #ff7f00; }
.c56 { background-color: #7c7c00; }
.c126 { background-color: #008060; }
.c143 { background-color: #69aecd; }
.c250 { background-color: #333; }
.scroll {
    display: flex;
    align-items: center;
    height: 12px;
    padding-left: 5px;
    background-color: #3b434c;
}
.scroll span {
    width: 7px;
}
.scroll i {
    width: 180px;
    height: 10px;
    background-color: #535e6a;
}
.status {
    height: 15px;
    margin: 4px 0 0 -6px;
    padding-left: 7px;
    border-top: 1px solid #616c78;
    font-size: 8px;
    line-height: 14px;
}
```
